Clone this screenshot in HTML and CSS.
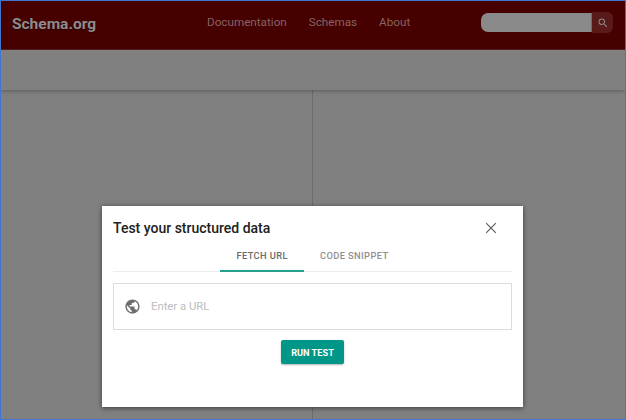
FILE: index.html
```html
<!DOCTYPE html>
<html lang="en">
<head>
<meta charset="utf-8">
<title>Schema.org</title>
<link rel="stylesheet" href="styles.css">
</head>
<body>
<div class="frame">
  <header class="topbar">
    <div class="logo">Schema.org</div>
    <nav class="nav">
      <a>Documentation</a>
      <a>Schemas</a>
      <a>About</a>
    </nav>
    <div class="search">
      <div class="search-field"></div>
      <div class="search-btn">
        <svg viewBox="0 0 24 24" width="12" height="12"><path fill="#8a8a8a" d="M15.5 14h-.79l-.28-.27A6.47 6.47 0 0 0 16 9.5 6.5 6.5 0 1 0 9.5 16c1.61 0 3.09-.59 4.23-1.57l.27.28v.79l5 4.99L20.49 19l-4.99-5zm-6 0C7.01 14 5 11.99 5 9.5S7.01 5 9.5 5 14 7.01 14 9.5 11.99 14 9.5 14z"/></svg>
      </div>
    </div>
  </header>
  <div class="subbar"></div>
  <main class="panes">
    <div class="pane pane-left"></div>
    <div class="pane"></div>
  </main>
  <section class="modal">
    <div class="modal-head">
      <h1 class="modal-title">Test your structured data</h1>
      <svg class="close" viewBox="0 0 12 12" width="12" height="12"><path d="M1.2 1.2 10.8 10.8M10.8 1.2 1.2 10.8" stroke="#555" stroke-width="1.1" fill="none"/></svg>
    </div>
    <div class="tabs">
      <div class="tab tab-active">FETCH URL</div>
      <div class="tab">CODE SNIPPET</div>
    </div>
    <div class="url-box">
      <svg class="globe" viewBox="0 0 24 24" width="17" height="17"><path fill="#6e6e6e" d="M12 2C6.48 2 2 6.48 2 12s4.48 10 10 10 10-4.48 10-10S17.52 2 12 2zm-1 17.93c-3.95-.49-7-3.85-7-7.93 0-.62.08-1.21.21-1.79L9 15v1c0 1.1.9 2 2 2v1.93zm6.9-2.54c-.26-.81-1-1.39-1.9-1.39h-1v-3c0-.55-.45-1-1-1H8v-2h2c.55 0 1-.45 1-1V7h2c1.1 0 2-.9 2-2v-.41c2.93 1.19 5 4.06 5 7.41 0 2.08-.8 3.97-2.1 5.39z"/></svg>
      <span class="url-placeholder">Enter a URL</span>
    </div>
    <div class="actions">
      <button class="run-btn">RUN TEST</button>
    </div>
  </section>
</div>
</body>
</html>
```

FILE: styles.css
```css
* { box-sizing: border-box; }
html, body { margin: 0; padding: 0; }
body { width: 626px; height: 420px; overflow: hidden; font-family: Roboto, "Liberation Sans", sans-serif; }
.frame {
  position: relative;
  width: 626px;
  height: 420px;
  border: 1px solid #3f76d2;
  background: #808080;
  display: flex;
  flex-direction: column;
  overflow: hidden;
}
.topbar {
  height: 49px;
  flex: none;
  background: #470000;
  border-bottom: 1px solid #5a2020;
  display: flex;
  align-items: center;
  padding-left: 11px;
}
.logo {
  font-family: Roboto, sans-serif;
  font-weight: 700;
  font-size: 15.5px;
  color: #8c8c8c;
  text-shadow: 0 1px 1px #2a0000;
  width: 195px;
  margin-top: -3px;
}
.nav { display: flex; gap: 22px; font-family: Roboto, sans-serif; font-size: 11.7px; color: #856464; margin-top: -6px; width: 274px; }
.search { display: flex; align-items: center; margin-top: -5px; }
.search-field { width: 111px; height: 19px; background: #8a8a8a; border-radius: 7px 0 0 7px; border-right: 1px solid #6e6e6e; }
.search-btn { width: 21px; height: 21px; background: #5a1a1a; border-radius: 0 6px 6px 0; display: flex; align-items: center; justify-content: center; }
.subbar { height: 40px; flex: none; background: #808080; box-shadow: 0 1px 4px rgba(0,0,0,.3); position: relative; }
.panes { flex: 1; display: flex; }
.pane { flex: 1; }
.pane-left { flex: none; width: 312px; border-right: 1px solid #6c6c6c; }
.modal {
  position: absolute;
  left: 101px;
  top: 205px;
  width: 421px;
  height: 201px;
  background: #fff;
  box-shadow: 0 1px 5px rgba(0,0,0,.55);
  padding: 0 11px;
}
.modal-head { display: flex; justify-content: space-between; align-items: center; height: 44px; padding-right: 15px; }
.modal-title { margin: 0; font-family: Roboto, sans-serif; font-size: 14px; font-weight: 500; color: #212121; }
.tabs { display: flex; justify-content: center; border-bottom: 1px solid #ececec; height: 22px; }
.tab { height: 21px; padding: 0 16px; font-size: 9.3px; font-weight: 500; letter-spacing: .4px; color: #8f8f8f; line-height: 12px; white-space: nowrap; }
.tab-active { color: #6a6a6a; border-bottom: 2px solid #26a08f; height: 22px; }
.url-box {
  margin-top: 11px;
  height: 47px;
  border: 1px solid #dcdcdc;
  display: flex;
  align-items: center;
  padding-left: 10px;
  gap: 10px;
}
.url-placeholder { font-size: 11.3px; color: #bdbdbd; }
.actions { display: flex; justify-content: center; margin-top: 10px; }
.run-btn {
  width: 63px;
  height: 24px;
  background: #009688;
  color: #fff;
  border: 0;
  border-radius: 2px;
  font-family: Roboto, sans-serif;
  font-size: 9.2px;
  font-weight: 700;
  padding: 0;
  box-shadow: 0 1px 2px rgba(0,0,0,.3);
}
```
